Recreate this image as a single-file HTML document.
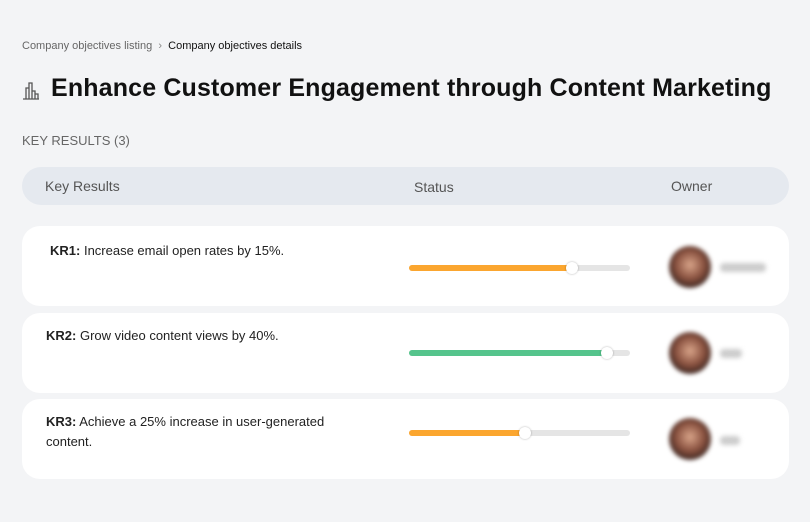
<!DOCTYPE html>
<html><head><style>
*{margin:0;padding:0;box-sizing:border-box}
body{width:810px;height:522px;background:#f3f4f6;font-family:"Liberation Sans",sans-serif;position:relative;overflow:hidden;color:#111}
.a{position:absolute}
.card{position:absolute;left:22px;width:767px;height:80px;background:#fff;border-radius:18px}
.kr{position:absolute;font-size:13px;line-height:20px;color:#222}
.track{position:absolute;left:409px;width:221px;height:6px;border-radius:3px;background:#e5e5e5}
.fill{position:absolute;left:0;top:0;height:6px;border-radius:3px}
.knob{position:absolute;top:-3px;width:12px;height:12px;border-radius:50%;background:#fff;box-shadow:0 0 2px rgba(0,0,0,.3)}
.av{position:absolute;left:669px;width:42px;height:42px;border-radius:50%;background:radial-gradient(circle at 50% 45%,#d9a58a 0,#8a5240 45%,#3a2520 75%);filter:blur(2px)}
.nm{position:absolute;left:720px;height:9px;border-radius:4px;background:#ccc;filter:blur(2.5px)}
</style></head><body>
<div class="a" style="left:22px;top:40px;font-size:11px;color:#666">Company objectives listing &nbsp;<span style="color:#888">›</span>&nbsp; <span style="color:#111">Company objectives details</span></div>
<svg class="a" style="left:22px;top:80px" width="18" height="20" viewBox="0 0 18 20"><g fill="none" stroke="#555" stroke-width="1.3"><path d="M1 19h16M4 19V8h3v11M7 19V3h3v16M10 19v-8h3v8M13 19v-5h3v5"/></g></svg>
<div class="a" style="left:51px;top:74px;font-size:25px;font-weight:bold;letter-spacing:0.15px">Enhance Customer Engagement through Content Marketing</div>
<div class="a" style="left:22px;top:133px;font-size:13px;color:#666">KEY RESULTS (3)</div>
<div class="a" style="left:22px;top:167px;width:767px;height:38px;border-radius:19px;background:#e5e9ef"></div>
<div class="a" style="left:45px;top:178px;font-size:14px;color:#555">Key Results</div>
<div class="a" style="left:414px;top:179px;font-size:14px;color:#555">Status</div>
<div class="a" style="left:671px;top:178px;font-size:14px;color:#555">Owner</div>

<div class="card" style="top:226px"></div>
<div class="kr" style="left:50px;top:241px"><b>KR1:</b> Increase email open rates by 15%.</div>
<div class="track" style="top:265px"><div class="fill" style="width:163px;background:#fba62f"></div><div class="knob" style="left:157px"></div></div>
<div class="av" style="top:246px"></div><div class="nm" style="top:263px;width:46px"></div>

<div class="card" style="top:313px"></div>
<div class="kr" style="left:46px;top:326px"><b>KR2:</b> Grow video content views by 40%.</div>
<div class="track" style="top:350px"><div class="fill" style="width:198px;background:#55c48c"></div><div class="knob" style="left:192px"></div></div>
<div class="av" style="top:332px"></div><div class="nm" style="top:349px;width:22px"></div>

<div class="card" style="top:399px"></div>
<div class="kr" style="left:46px;top:412px"><b>KR3:</b> Achieve a 25% increase in user-generated<br>content.</div>
<div class="track" style="top:430px"><div class="fill" style="width:116px;background:#fba62f"></div><div class="knob" style="left:110px"></div></div>
<div class="av" style="top:418px"></div><div class="nm" style="top:436px;width:20px"></div>
</body></html>
